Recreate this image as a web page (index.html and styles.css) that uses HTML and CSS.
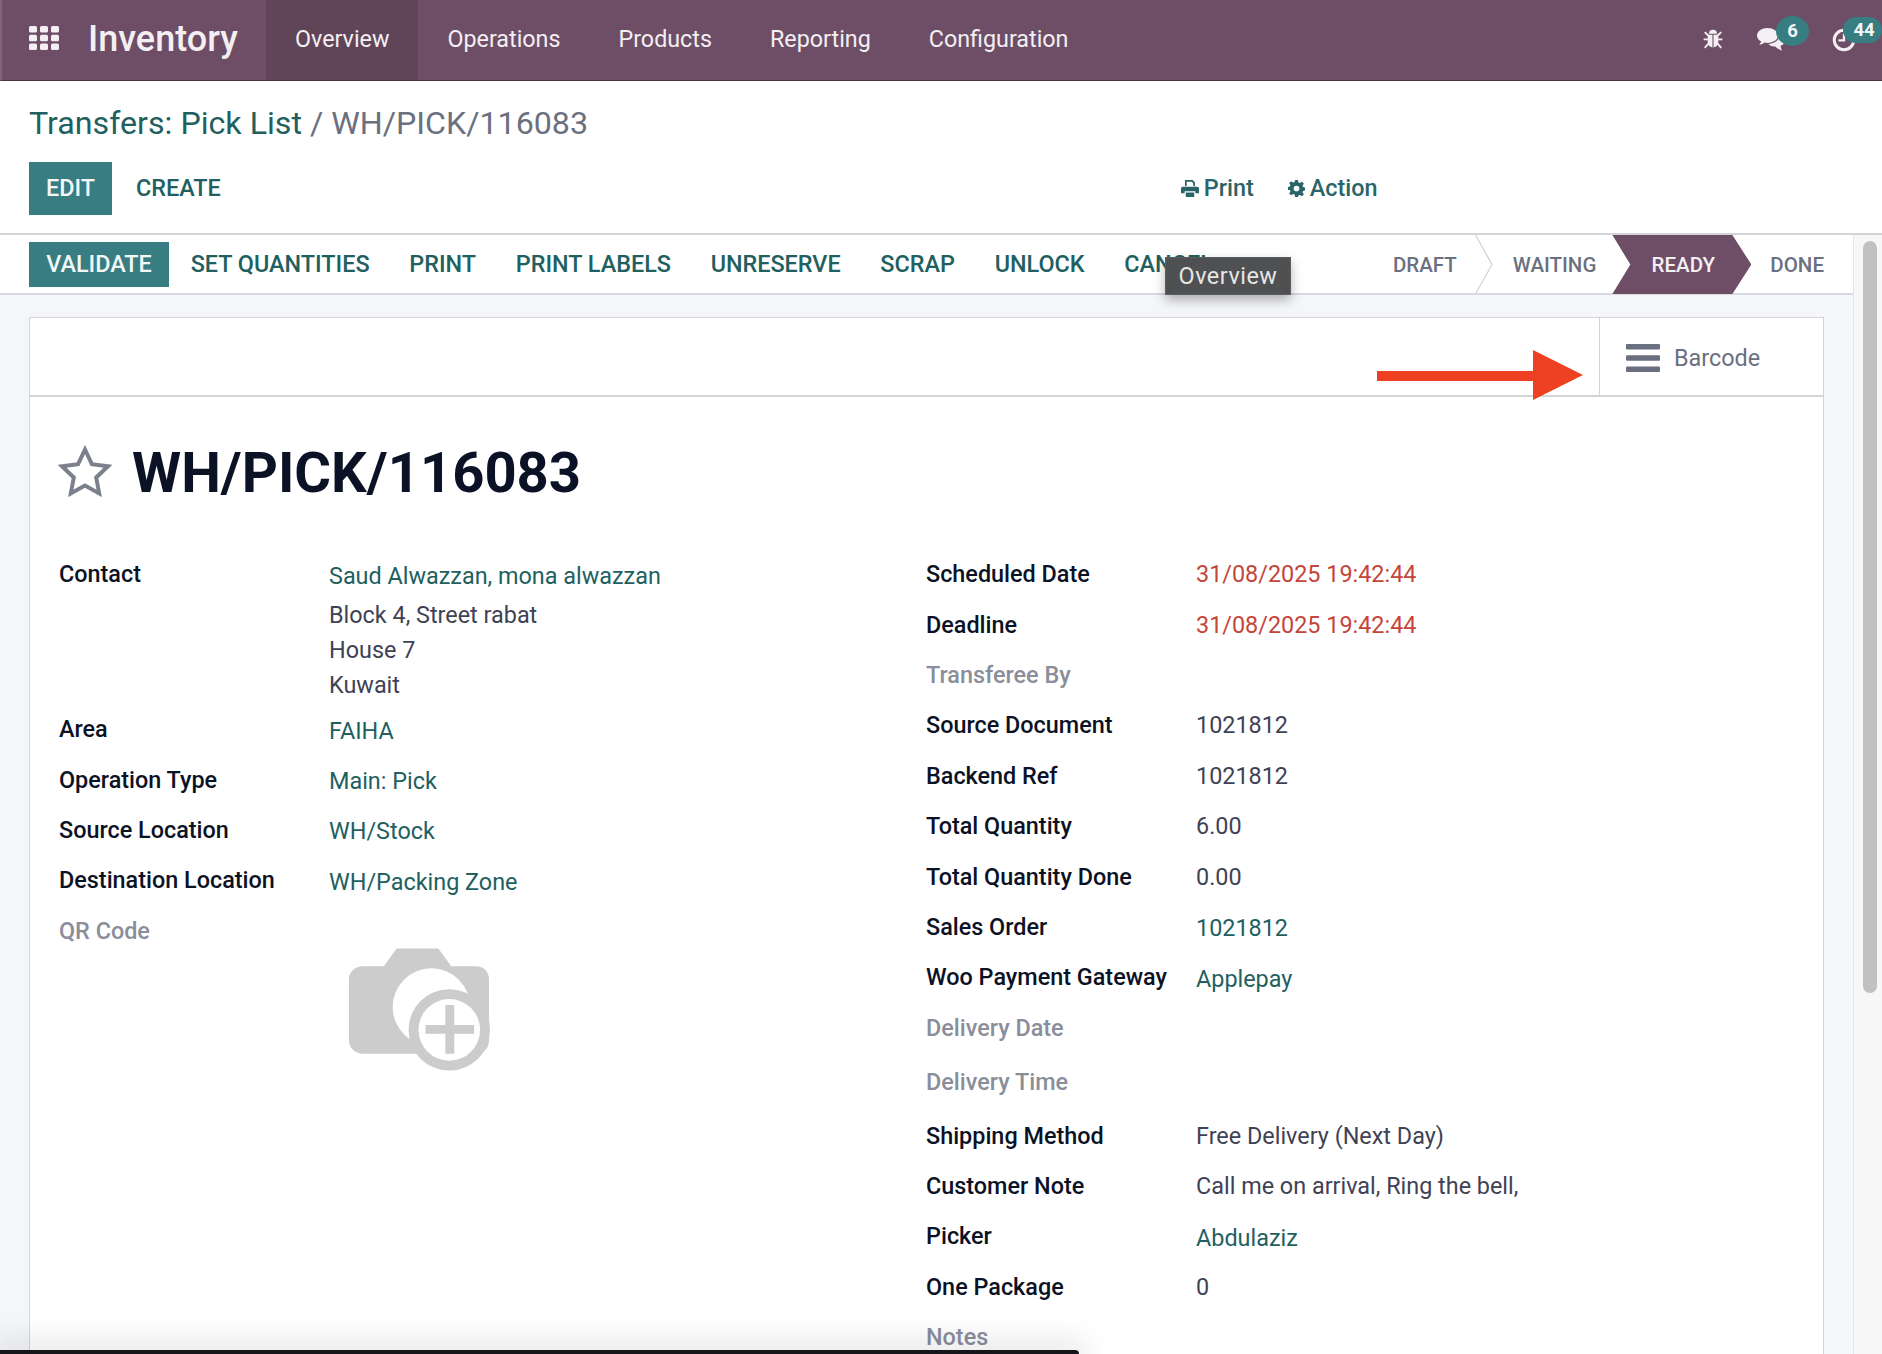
FILE: index.html
```html
<!DOCTYPE html>
<html>
<head>
    <title>WH/PICK/116083 - Inventory</title>
    <link rel="stylesheet" href="styles.css">
</head>
<body>
    <nav class="navbar">
        <div class="apps-icon">
            <svg width="30" height="24" viewBox="0 0 30 24" fill="#f3eff2">
                <rect x="0" y="0" width="8" height="6.6" rx="1.6"/><rect x="11" y="0" width="8" height="6.6" rx="1.6"/><rect x="22" y="0" width="8" height="6.6" rx="1.6"/>
                <rect x="0" y="8.7" width="8" height="6.6" rx="1.6"/><rect x="11" y="8.7" width="8" height="6.6" rx="1.6"/><rect x="22" y="8.7" width="8" height="6.6" rx="1.6"/>
                <rect x="0" y="17.4" width="8" height="6.6" rx="1.6"/><rect x="11" y="17.4" width="8" height="6.6" rx="1.6"/><rect x="22" y="17.4" width="8" height="6.6" rx="1.6"/>
            </svg>
        </div>
        <a class="brand">Inventory</a>
        <ul class="menu">
            <li class="active"><a>Overview</a></li>
            <li><a>Operations</a></li>
            <li><a>Products</a></li>
            <li><a>Reporting</a></li>
            <li><a>Configuration</a></li>
        </ul>
        <div class="systray">
            <svg class="tray-bug" width="22" height="22" viewBox="0 0 22 24" fill="#f3eff2">
                <path d="M6.6 6.2a4.4 4.4 0 0 1 8.8 0z"/>
                <path d="M5.2 7.4h5.2v13.8c-3-.3-5.2-2.5-5.2-5.6zM11.6 7.4h5.2v8.2c0 3.1-2.2 5.3-5.2 5.6z"/>
                <path d="M2 4.400l3.800 3.800M20 4.400l-3.800 3.800M.8 12.400h4.600M21.200 12.400h-4.600M2 21.600l4-4.600M20 21.600l-4-4.600" stroke="#f3eff2" stroke-width="2" fill="none"/>
            </svg>
            <div class="tray-item tray-chat">
                <svg width="28" height="23" viewBox="0 0 28 23" fill="#f3eff2">
                    <path d="M10.5 0C4.7 0 0 3.4 0 7.6c0 2.5 1.6 4.6 4.1 6-.3 1.3-1 2.4-1.9 3.3 2.1-.2 4.2-1.1 5.6-2.3 1 .2 1.8.3 2.7.3 5.8 0 10.5-3.1 10.5-7.3S16.3 0 10.5 0z"/>
                    <path d="M22.4 7.2c.3 4.6-4.4 8.3-11 8.9 1.4 1.8 4 2.6 6.7 2.4 1.5 1.6 4 3 7.2 4.2-.9-1.2-1.6-3-1.7-4.9 2.6-1 4.4-2.8 4.4-4.8 0-2.500-2.200-4.500-5.600-5.800z"/>
                </svg>
                <span class="badge badge-chat">6</span>
            </div>
            <div class="tray-item tray-clock">
                <svg width="24" height="24" viewBox="0 0 26 26" fill="none" stroke="#f3eff2">
                    <circle cx="13" cy="13" r="10.600" stroke-width="3.200"/>
                    <path d="M13 6v7.400H7" stroke-width="2.600"/>
                </svg>
                <span class="badge badge-clock">44</span>
            </div>
        </div>
    </nav>

    <header class="control-panel">
        <div class="breadcrumb"><a>Transfers: Pick List</a> <span class="sep">/</span> <span>WH/PICK/116083</span></div>
        <div class="cp-buttons">
            <div class="cp-left">
                <button class="btn btn-primary btn-edit">EDIT</button>
                <button class="btn btn-link">CREATE</button>
            </div>
            <div class="cp-actions">
                <a class="cp-action">
                    <svg width="18" height="17" viewBox="0 0 18 17" fill="#2b6468"><path d="M4 0h7.5L14 2.5V6h-1.7V3.4L10.8 1.8H5.7V6H4zM1.8 6.8h14.4c1 0 1.8.8 1.8 1.8v4.6h-3.6v-1.9H3.6v1.9H0V8.600c0-1 .8-1.800 1.800-1.800zM4.800 12.600h8.400V17H4.800z"/></svg>
                    Print
                </a>
                <a class="cp-action">
                    <svg width="17" height="17" viewBox="0 0 24 24" fill="#2b6468"><path fill-rule="evenodd" d="M10 0h4l.7 3.400 2 .8 2.900-1.900 2.800 2.800-1.900 2.900.8 2 3.400.7v4l-3.400.7-.8 2 1.900 2.900-2.800 2.800-2.900-1.900-2 .8L14 24h-4l-.7-3.400-2-.8-2.900 1.900-2.800-2.800 1.900-2.900-.8-2L-.7 14v-4l3.400-.7.8-2-1.900-2.900 2.800-2.800 2.900 1.900 2-.8zM12 8a4 4 0 1 0 0 8 4 4 0 0 0 0-8z"/></svg>
                    Action
                </a>
            </div>
        </div>
    </header>

    <div class="workspace">
        <div class="workspace-main">
            <div class="statusbar">
                <div class="status-buttons">
                    <button class="btn btn-primary btn-validate">VALIDATE</button>
                    <button class="btn btn-link">SET QUANTITIES</button>
                    <button class="btn btn-link">PRINT</button>
                    <button class="btn btn-link">PRINT LABELS</button>
                    <button class="btn btn-link">UNRESERVE</button>
                    <button class="btn btn-link">SCRAP</button>
                    <button class="btn btn-link">UNLOCK</button>
                    <button class="btn btn-link">CANCEL</button>
                </div>
                <div class="stages">
                    <span class="stage stage-draft">DRAFT
                        <svg class="stage-arrow" width="18" height="60" viewBox="0 0 18 60" fill="none" stroke="#cfd1d6" stroke-width="1.200"><path d="M.5 0l16.500 29.500L.5 59"/></svg>
                    </span>
                    <span class="stage stage-waiting">WAITING</span>
                    <span class="stage stage-ready">READY</span>
                    <span class="stage stage-done">DONE</span>
                </div>
            </div>

            <div class="sheet-area">
                <section class="card">
                    <div class="tab-header">
                        <svg class="red-arrow" width="206" height="50" viewBox="0 0 206 50" fill="#ee4023"><path d="M0 21h156V0l50 25-50 25V31H0z"/></svg>
                        <div class="barcode-tab">
                            <svg width="34" height="28" viewBox="0 0 34 28" fill="#6b7080"><rect width="34" height="5.400" rx="1"/><rect y="11.300" width="34" height="5.400" rx="1"/><rect y="22.600" width="34" height="5.400" rx="1"/></svg>
                            <span>Barcode</span>
                        </div>
                    </div>
                    <div class="sheet-body">
                        <div class="title-row">
                            <svg class="title-star" width="54" height="52" viewBox="0 0 54 52" fill="none" stroke="#7c808c" stroke-width="4" stroke-linejoin="miter"><path d="M27 4.500l6.900 14.700 16 2.100-11.700 11.200 3 15.900L27 40.600l-14.200 7.800 3-15.900L4.100 21.300l16-2.100z"/></svg>
                            <h1>WH/PICK/116083</h1>
                        </div>
                        <div class="field-columns">
                            <div class="field-col">
                                <div class="field field-contact">
                                    <label>Contact</label>
                                    <div class="value">
                                        <a class="contact-link">Saud Alwazzan, mona alwazzan</a>
                                        <div class="address">Block 4, Street rabat<br>House 7<br>Kuwait</div>
                                    </div>
                                </div>
                                <div class="field"><label>Area</label><a class="value">FAIHA</a></div>
                                <div class="field"><label>Operation Type</label><a class="value">Main: Pick</a></div>
                                <div class="field"><label>Source Location</label><a class="value">WH/Stock</a></div>
                                <div class="field"><label>Destination Location</label><a class="value">WH/Packing Zone</a></div>
                                <div class="field field-qr">
                                    <label class="muted">QR Code</label>
                                    <svg class="qr-placeholder" width="141" height="124" viewBox="0 0 142 124">
                                        <path fill="#cccccc" d="M48 0h42l13 18h25c8 0 13 6 13 13v62c0 7-5 13-13 13H14c-8 0-14-6-14-13V31c0-7 6-13 14-13h21z"/>
                                        <circle cx="83" cy="59" r="39" fill="#ffffff"/>
                                        <circle cx="101" cy="82" r="41" fill="#cccccc"/>
                                        <circle cx="101" cy="82" r="31" fill="#ffffff"/>
                                        <path fill="#cccccc" d="M97 57h9v20h20v9h-20v20h-9V86H77v-9h20z"/>
                                    </svg>
                                </div>
                            </div>
                            <div class="field-col">
                                <div class="field"><label>Scheduled Date</label><span class="value text-danger">31/08/2025 19:42:44</span></div>
                                <div class="field"><label>Deadline</label><span class="value text-danger">31/08/2025 19:42:44</span></div>
                                <div class="field"><label class="muted">Transferee By</label></div>
                                <div class="field"><label>Source Document</label><span class="value">1021812</span></div>
                                <div class="field"><label>Backend Ref</label><span class="value">1021812</span></div>
                                <div class="field"><label>Total Quantity</label><span class="value">6.00</span></div>
                                <div class="field"><label>Total Quantity Done</label><span class="value">0.00</span></div>
                                <div class="field"><label>Sales Order</label><a class="value">1021812</a></div>
                                <div class="field"><label>Woo Payment Gateway</label><a class="value">Applepay</a></div>
                                <div class="field"><label class="muted">Delivery Date</label></div>
                                <div class="field field-tall"><label class="muted">Delivery Time</label></div>
                                <div class="field"><label>Shipping Method</label><span class="value">Free Delivery (Next Day)</span></div>
                                <div class="field"><label>Customer Note</label><span class="value">Call me on arrival, Ring the bell,</span></div>
                                <div class="field"><label>Picker</label><a class="value">Abdulaziz</a></div>
                                <div class="field"><label>One Package</label><span class="value">0</span></div>
                                <div class="field"><label class="muted">Notes</label></div>
                            </div>
                        </div>
                    </div>
                </section>
            </div>
        </div>
        <div class="scrollbar"><div class="scroll-thumb"></div></div>
    </div>

    <div class="tooltip">Overview</div>
    <div class="dock-edge"></div>
</body>
</html>
```

FILE: styles.css
```css
* {
    box-sizing: border-box;
}

html,
body {
    height: 100%;
}

body {
    margin: 0;
    overflow: hidden;
    display: flex;
    flex-direction: column;
    position: relative;
    font-family: Roboto, "Noto Sans", sans-serif;
    font-size: 23.4px;
    color: #3f4254;
    background-color: #fff;
}

a {
    color: #22605f;
    text-decoration: none;
}

button {
    font-family: inherit;
}

/* top bar */
.navbar {
    flex: none;
    display: flex;
    align-items: stretch;
    height: 81px;
    background-color: #6e4e66;
    border-left: 2px solid #7d6676;
    border-bottom: 1px solid #4a3344;
    color: #f3eff2;
}

.apps-icon {
    display: flex;
    align-items: center;
    padding-left: 27px;
    padding-bottom: 4px;
}

.brand {
    display: flex;
    align-items: center;
    margin-left: 29px;
    width: 178px;
    padding-bottom: 2px;
    font-size: 36px;
    font-weight: 500;
    color: #f3eff2;
}

.menu {
    display: flex;
    list-style-type: none;
    margin: 0;
    padding: 0;
    font-size: 23.3px;
}

.menu li {
    display: flex;
    align-items: center;
    padding: 0 29px 2px;
}

.menu li a {
    color: #f3eff2;
}

.menu li.active {
    background-color: #604559;
}

.systray {
    margin-left: auto;
    display: flex;
    align-items: center;
}

.tray-bug {
    margin-right: 33px;
    margin-top: -3px;
}

.tray-item {
    position: relative;
    display: flex;
}

.tray-chat {
    margin-right: 47px;
    margin-top: -1px;
}

.tray-clock {
    width: 50px;
}

.badge {
    position: absolute;
    display: flex;
    align-items: center;
    justify-content: center;
    background-color: #377d81;
    color: #f3f6f6;
    font-size: 18.5px;
    font-weight: 700;
}

.badge-chat {
    top: -12px;
    left: 19px;
    width: 33px;
    height: 30px;
    border-radius: 50%;
}

.badge-clock {
    top: -11px;
    left: 11px;
    width: 39px;
    height: 26px;
    padding-left: 3px;
    border-radius: 13px;
}

/* breadcrumb and main buttons */
.control-panel {
    flex: none;
    height: 154px;
    padding: 0 29px;
    border-bottom: 2px solid #d3d4d8;
}

.breadcrumb {
    padding-top: 21px;
    height: 81px;
    font-size: 32.2px;
    line-height: 42px;
    color: #6b7080;
}

.breadcrumb a {
    color: #22605f;
}

.cp-buttons {
    display: flex;
    align-items: center;
    height: 53px;
}

.cp-left {
    display: flex;
    align-items: stretch;
    height: 100%;
    gap: 24px;
}

.cp-actions {
    display: flex;
    gap: 34px;
    margin-left: 960px;
    font-weight: 500;
    padding-bottom: 1px;
}

.cp-action {
    display: flex;
    align-items: center;
    gap: 5px;
    color: #2b6468;
}

.btn {
    border: 0;
    padding: 0 0 2px;
    font-size: 23.4px;
    font-weight: 500;
    background: none;
    cursor: pointer;
}

.btn-primary {
    background-color: #377d81;
    color: #f3f7f7;
}

.btn-link {
    color: #22605f;
}

.btn-edit {
    width: 83px;
}

.btn-validate {
    width: 140px;
    height: 45px;
    margin-right: -18px;
}

/* scrolling part */
.workspace {
    flex: 1;
    min-height: 0;
    display: flex;
}

.workspace-main {
    flex: 1;
    min-width: 0;
    display: flex;
    flex-direction: column;
}

.scrollbar {
    flex: none;
    width: 29px;
    padding: 6px 5px 0 9px;
    background-color: #f7f7f8;
    border-left: 1px solid #e6e6e8;
}

.scroll-thumb {
    height: 752px;
    border-radius: 8px;
    background-color: #c1c1c1;
}

.statusbar {
    flex: none;
    display: flex;
    justify-content: space-between;
    height: 60px;
    padding-left: 29px;
    border-bottom: 2px solid #d8dae0;
}

.status-buttons {
    display: flex;
    align-items: center;
    gap: 39.7px;
    height: 58px;
}

.status-buttons .btn {
    padding: 0;
}

.stages {
    display: flex;
    align-items: center;
    height: 59px;
    margin-right: 29px;
    font-size: 20.5px;
    font-weight: 500;
    color: #6b7080;
}

.stage {
    position: relative;
    display: flex;
    align-items: center;
    height: 100%;
}

.stage-arrow {
    position: absolute;
    top: 0;
    right: -36px;
}

.stage-draft {
    margin-right: 56px;
}

.stage-waiting {
    margin-right: 16px;
}

.stage-ready {
    justify-content: center;
    width: 139px;
    padding-left: 3px;
    margin-right: 19px;
    color: #f3eff2;
    background-color: #6e4e66;
    clip-path: polygon(0 0, 120px 0, 100% 50%, 120px 100%, 0 100%, 18px 50%);
}

.sheet-area {
    flex: 1;
    min-height: 0;
    padding: 22px 29px 0;
    background-color: #f5f6fa;
}

.card {
    height: 100%;
    background-color: #fff;
    border: 1px solid #d3d4d8;
    border-bottom: 0;
}

.tab-header {
    position: relative;
    display: flex;
    justify-content: flex-end;
    height: 79px;
    border-bottom: 2px solid #d3d4d8;
}

.red-arrow {
    position: absolute;
    top: 32px;
    left: 1347px;
}

.barcode-tab {
    display: flex;
    align-items: center;
    gap: 14px;
    width: 224px;
    padding-left: 26px;
    padding-top: 2px;
    border-left: 1px solid #d3d4d8;
    color: #6b7080;
}

.sheet-body {
    padding: 0 28px 0 29px;
}

.title-row {
    display: flex;
    align-items: center;
    gap: 20px;
    height: 152px;
    margin-left: -1px;
}

.title-star {
    margin-top: -4px;
}

.title-row h1 {
    margin: 0;
    font-size: 56.2px;
    font-weight: 700;
    color: #0c1225;
}

.field-columns {
    display: flex;
}

.field-col {
    flex: none;
    width: 867px;
}

.field {
    display: flex;
    align-items: center;
    height: 50.4px;
}

.field-tall {
    height: 57.6px;
}

.field label {
    flex: none;
    width: 270px;
    font-weight: 500;
    color: #0c1225;
}

.field label.muted {
    color: #8a8e9b;
}

.field a.value {
    padding-top: 3px;
}

.text-danger {
    color: #c4453a;
}

.field-contact {
    align-items: flex-start;
    height: 155px;
    padding-top: 11px;
}

.contact-link {
    display: block;
    padding-top: 2px;
    height: 38px;
}

.address {
    line-height: 35px;
}

.field-qr {
    align-items: flex-start;
    padding-top: 11px;
}

.qr-placeholder {
    margin-top: 31px;
    margin-left: 20px;
}

/* things lying over the page */
.tooltip {
    position: absolute;
    top: 257px;
    left: 1165px;
    width: 126px;
    height: 38px;
    display: flex;
    align-items: center;
    justify-content: center;
    font-size: 23.4px;
    letter-spacing: 0.5px;
    color: #e6e6e6;
    background-color: #4f5052;
    border: 1px solid #5c5d5f;
    box-shadow: 0 5px 12px rgba(0, 0, 0, 0.3);
}

.dock-edge {
    position: absolute;
    left: 0;
    bottom: 0;
    width: 1079px;
    height: 4px;
    background-color: #16161a;
    border-top-right-radius: 5px;
    box-shadow: 0 0 30px 8px rgba(0, 0, 0, 0.12);
}
```
